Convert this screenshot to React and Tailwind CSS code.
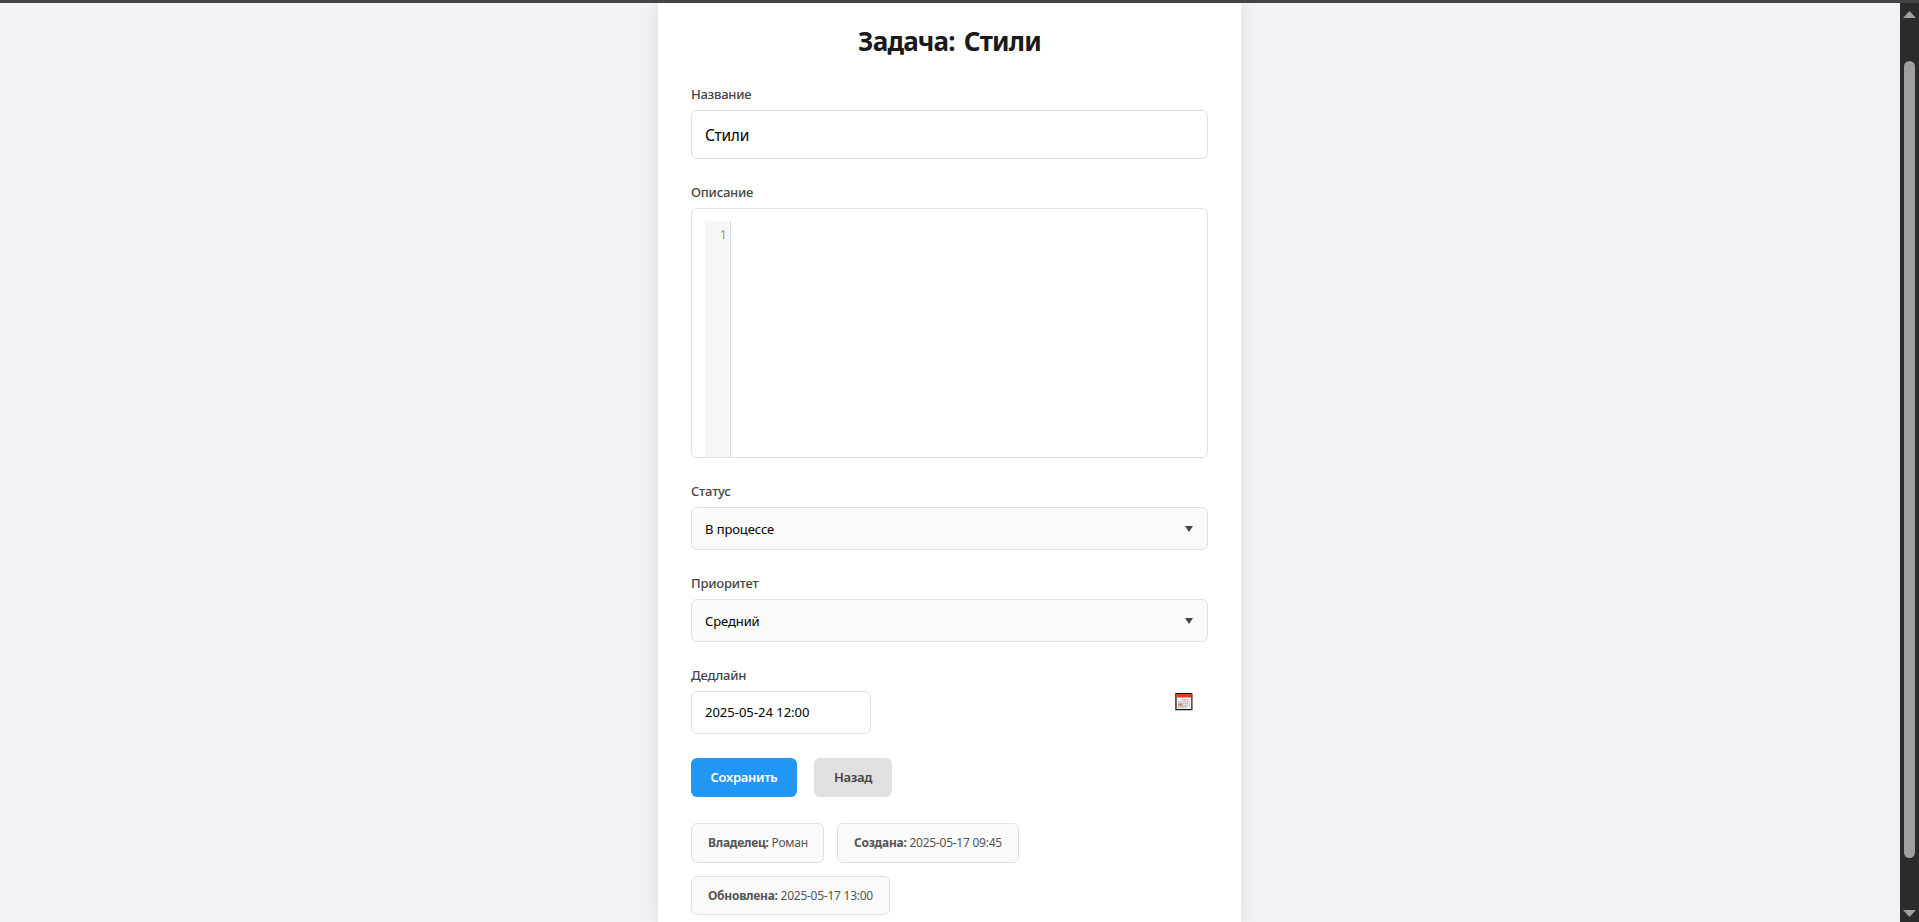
import React from 'react';

const fields = {
  status: 'В процессе',
  priority: 'Средний',
};

function Label({ children }) {
  return (
    <div className="mb-[7px] h-[18px] text-[13px] font-[540] leading-[18px] tracking-[-0.22px] text-[#444]">
      {children}
    </div>
  );
}

function Select({ label, value }) {
  return (
    <div className="mb-6">
      <Label>{label}</Label>
      <div className="flex h-[43px] items-center justify-between rounded-md border border-[#e0e0e0] bg-[#fafafa] pl-[13px] pr-[14px]">
        <span className="text-[13px] leading-[18px] tracking-[-0.1px] text-black">{value}</span>
        <svg width="8" height="6" viewBox="0 0 8 6">
          <path d="M0 0H8L4 6Z" fill="#444" />
        </svg>
      </div>
    </div>
  );
}

function Info({ name, value, className }) {
  return (
    <div className={`flex items-center rounded-md border border-[#e0e0e0] bg-[#fafafa] pl-4 text-xs text-[#555] ${className}`}>
      <span className="whitespace-pre font-bold tracking-[-0.25px]">{name}: </span>
      <span className="tracking-[-0.25px]">{value}</span>
    </div>
  );
}

function CalendarIcon() {
  return (
    <svg width="18" height="18" viewBox="0 0 18 18" className="mr-[15px] mt-[2px]">
      <rect width="17.5" height="17.5" fill="#8a8a8a" />
      <rect x="0.6" width="16" height="17" fill="#111" />
      <rect x="16" y="0.8" width="1.5" height="16" fill="#555" />
      <rect x="1.6" y="1" width="14.4" height="15" fill="#f5f3f3" />
      <rect x="1.6" y="1" width="14.4" height="3.5" fill="#f23a14" />
      <path
        d="M7 6.7H14.5M3 8.7H14.5M3 10.7H14.5M3 12.7H14.5M3 14.2H11"
        stroke="#bcbcbc"
        strokeWidth="1.5"
        strokeDasharray="1.6 .5"
      />
      <path d="M3.5 11.4H7.2M5.4 10.2V13.2" stroke="#f07a6a" strokeWidth="1.6" />
    </svg>
  );
}

function Scrollbar() {
  return (
    <div className="flex w-[19px] shrink-0 flex-col items-center bg-[#2b2b2b]">
      <svg width="13" height="7" viewBox="0 0 13 7" className="mt-2 shrink-0">
        <path d="M6.5 0L13 7H0Z" fill="#9f9f9f" />
      </svg>
      <div className="mt-[43px] h-[797px] w-[11px] shrink-0 rounded-full bg-[#9f9f9f]" />
      <svg width="13" height="7" viewBox="0 0 13 7" className="mt-[52px] shrink-0">
        <path d="M0 0H13L6.5 7Z" fill="#9f9f9f" />
      </svg>
    </div>
  );
}

export default function App() {
  return (
    <div className="flex h-[922px] flex-col overflow-hidden bg-[#f0f2f6] font-['Noto_Sans',sans-serif]">
      <div className="h-[3px] shrink-0 bg-[#444]" />
      <div className="flex min-h-0 flex-1">
        <main className="flex min-w-0 flex-1 overflow-hidden pl-[658px]">
          <div className="w-[583px] bg-white px-[33px] pt-[19px] shadow-[0_0_16px_rgba(0,0,0,0.09)]">
            <h1 className="mb-[25px] h-[38px] text-center text-[26px] font-bold leading-[39px] tracking-[-0.8px] text-[#1a1a1a] [word-spacing:3px]">
              Задача: Стили
            </h1>

            <Label>Название</Label>
            <div className="mb-6 flex h-[49px] items-center rounded-md border border-[#e0e0e0] pl-[13px] pt-[2px] text-[15.5px] tracking-[-0.3px] text-black">
              Стили
            </div>

            <Label>Описание</Label>
            <div className="mb-6 h-[250px] rounded-md border border-[#e0e0e0] pl-[13px] pt-3">
              <div className="h-full w-[26px] border-r border-[#ddd] bg-[#f7f7f7] pr-[3px] pt-[5px] text-right text-[12.5px] leading-[18px] text-[#999]">
                1
              </div>
            </div>

            <Select label="Статус" value={fields.status} />
            <Select label="Приоритет" value={fields.priority} />

            <Label>Дедлайн</Label>
            <div className="mb-6 flex items-start justify-between">
              <div className="flex h-[43px] w-[180px] items-center rounded-md border border-[#e0e0e0] pl-[13px] text-[13px] text-black">
                2025-05-24 12:00
              </div>
              <CalendarIcon />
            </div>

            <div className="mb-[26px] flex gap-[17px] text-[13px] font-semibold tracking-[-0.3px]">
              <button className="h-[39px] w-[106px] rounded-md bg-[#2196f3] text-white">Сохранить</button>
              <button className="h-[39px] w-[78px] rounded-md bg-[#e0e0e0] text-[#444]">Назад</button>
            </div>

            <div className="flex flex-wrap gap-[13px]">
              <Info name="Владелец" value="Роман" className="h-[40px] w-[133px]" />
              <Info name="Создана" value="2025-05-17 09:45" className="h-[40px] w-[182px]" />
              <Info name="Обновлена" value="2025-05-17 13:00" className="h-[39px] w-[199px]" />
            </div>
          </div>
        </main>
        <Scrollbar />
      </div>
    </div>
  );
}
